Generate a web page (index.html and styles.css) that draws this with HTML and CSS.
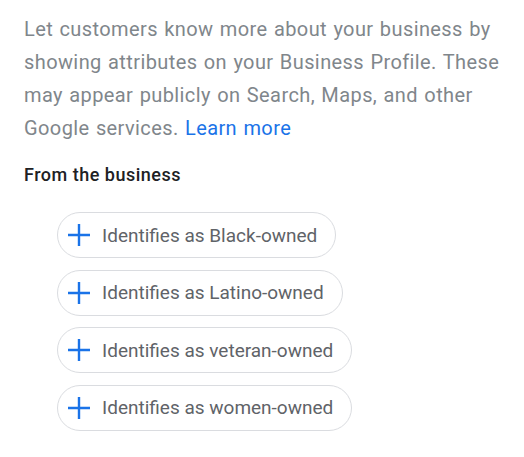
FILE: index.html
```html
<html><head>
<meta http-equiv="content-type" content="text/html; charset=UTF-8">
<link rel="stylesheet" href="styles.css">
</head><body>
<div id="wrap">
	<p class="intro">Let customers know more about your business by showing attributes on your Business Profile. These may appear publicly on Search, Maps, and other Google services. <a href="#">Learn more</a></p>

	<h2 class="section">From the business</h2>

	<ul class="chips">
		<li><button class="chip"><svg viewBox="0 0 24 24" width="24" height="24"><path d="M12 1v22M1 12h22" stroke="#1a73e8" stroke-width="2.4" fill="none"/></svg><span>Identifies as Black-owned</span></button></li>
		<li><button class="chip"><svg viewBox="0 0 24 24" width="24" height="24"><path d="M12 1v22M1 12h22" stroke="#1a73e8" stroke-width="2.4" fill="none"/></svg><span>Identifies as Latino-owned</span></button></li>
		<li><button class="chip"><svg viewBox="0 0 24 24" width="24" height="24"><path d="M12 1v22M1 12h22" stroke="#1a73e8" stroke-width="2.4" fill="none"/></svg><span>Identifies as veteran-owned</span></button></li>
		<li><button class="chip"><svg viewBox="0 0 24 24" width="24" height="24"><path d="M12 1v22M1 12h22" stroke="#1a73e8" stroke-width="2.4" fill="none"/></svg><span>Identifies as women-owned</span></button></li>
	</ul>
</div>
</body></html>
```

FILE: styles.css
```css
body {
	margin: 0;
	padding: 0;
	background: #fff;
	font-family: Roboto, "Liberation Sans", sans-serif;
}

#wrap {
	padding: 13px 2px 0 24px;
	}

.intro {
	margin: 0;
	font-size: 20px;
	letter-spacing: 0.4px;
	word-spacing: 1px;
	line-height: 33px;
	color: #80868b;
	}

.intro a {
	color: #1a73e8;
	text-decoration: none;
	}

.section {
	margin: 18px 0 0 0;
	font-size: 18px;
	letter-spacing: 0.5px;
	font-weight: 500;
	line-height: 24px;
	color: #202124;
	}

.chips {
	list-style: none;
	margin: 25px 0 0 33px;
	padding: 0;
	display: flex;
	flex-direction: column;
	align-items: flex-start;
	gap: 11.5px;
	}

.chip {
	display: flex;
	align-items: center;
	gap: 11px;
	height: 46px;
	padding: 0 18px 0 9px;
	border: 1px solid #dadce0;
	border-radius: 23px;
	background: #fff;
	font-family: Roboto, "Liberation Sans", sans-serif;
	font-size: 19px;
	color: #5f6368;
	cursor: pointer;
	}

.chip svg {
	flex: none;
	}
```
